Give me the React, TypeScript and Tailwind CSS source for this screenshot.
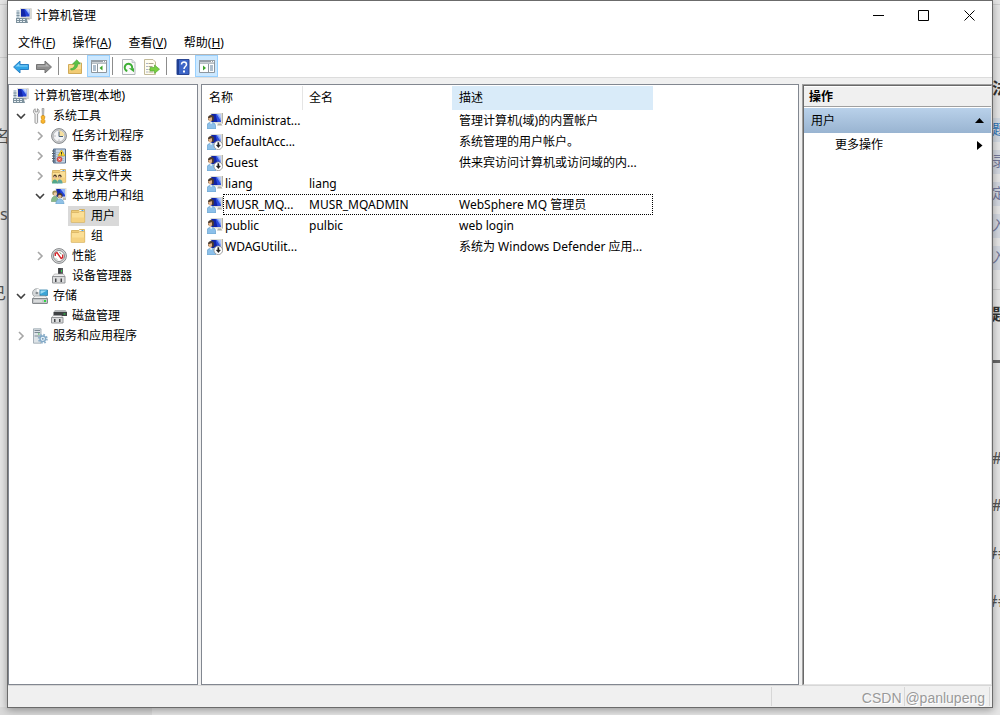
import type { ReactNode } from "react";

/* ---------- icons ---------- */

type IconProps = { size?: number };

function Svg({ size = 16, children }: IconProps & { children: ReactNode }) {
  return (
    <svg width={size} height={size} viewBox="0 0 16 16" aria-hidden="true" className="shrink-0">
      {children}
    </svg>
  );
}

function ComputerIcon() {
  return (
    <Svg>
      <path d="M4 0h11l.8.800V11H5z" fill="#cfd0cc" />
      <path d="M4 0h10.500v9.500H4z" fill="#e3e3dd" />
      <path d="M5 1h8.500v7.500H5z" fill="#2443d6" />
      <path d="M5 1h3l2 7.500H5z" fill="#1226a6" />
      <path d="M9 1h4.500v6z" fill="#8fb0fb" />
      <path d="M10.500 1h3v4z" fill="#c4d6ff" />
      <path d="M9 10h4l1 1.500H9z" fill="#a9aaa4" />
      <path d="M.5 2h3v8h-3z" fill="#b9c9d3" />
      <path d="M.5 4.500h3v1h-3zM.5 7h3v1h-3z" fill="#7a909e" />
      <path d="M0 10h10.500l1.500 5H0z" fill="#7d919d" />
      <path d="M1 11h2v1H1zm3 0h2v1H4zm3 0h2v1H7zM1 13h2v1H1zm3 0h2v1H4zm3 0h2v1H7z" fill="#e9f1f5" />
    </Svg>
  );
}

function ToolsIcon() {
  return (
    <Svg>
      <path d="M3.200.8C1 1.600.8 4.800 3 6v8.500c0 1.200 2.600 1.200 2.600 0V6c2.200-1.200 2-4.400-.2-5.200v3H3.200z" fill="#efefef" stroke="#858585" strokeWidth=".8" />
      <path d="M10 .5h2l-.4 7h-1.200z" fill="#c8c8c8" stroke="#8c8c8c" strokeWidth=".6" />
      <path d="M9.300 8.200c0-1 3.400-1 3.400 0v2l-.7 1 .9 1.300v1.800c0 1.400-3.800 1.400-3.800 0v-1.800l.9-1.300-.7-1z" fill="#fbb62c" stroke="#c8860e" strokeWidth=".7" />
    </Svg>
  );
}

function ClockIcon() {
  return (
    <Svg>
      <circle cx="8" cy="8" r="7.400" fill="#cfd1d3" stroke="#85888b" />
      <circle cx="8" cy="8" r="5.700" fill="#f4f5f7" stroke="#a9abae" strokeWidth=".7" />
      <path d="M8 8h5.400A5.400 5.400 0 0 0 8 2.600z" fill="#f5dfa0" />
      <path d="M8 3.500V8.500h4" fill="none" stroke="#4b637c" />
      <path d="M3.500 8h1M8 12.600v-1" stroke="#888" />
    </Svg>
  );
}

function EventIcon() {
  return (
    <Svg>
      <path d="M2.500 1h12v14h-12z" fill="#8199b4" stroke="#566f8d" />
      <path d="M5 1.500h9v13H5z" fill="#c7d5e4" />
      <path d="M5 4.500h8M5 6.500h8M5 8.500h8M5 10.500h8M5 12.500h8" stroke="#9db3c9" strokeWidth=".7" />
      <path d="M1 3h3M1 5.500h3M1 8h3M1 10.500h3M1 13h3" stroke="#59626d" />
      <path d="M10.500 2 14 7.800H7z" fill="#ffdb33" stroke="#c79d0a" strokeWidth=".6" />
      <path d="M10.500 4v2M10.500 6.500v.8" stroke="#333" />
      <circle cx="8.500" cy="11.300" r="2.500" fill="#e5564c" stroke="#b5332b" strokeWidth=".5" />
      <path d="m7.600 10.400 1.800 1.800m0-1.800-1.800 1.800" stroke="#fff" strokeWidth=".8" />
    </Svg>
  );
}

function FolderShape() {
  return (
    <>
      <path d="M1.500 2.500h7l1-1h5v12.500h-13z" fill="#f0cd77" stroke="#cfa953" strokeWidth=".8" />
      <path d="M9.500 2h4.500v1.500H9z" fill="#fdfdf8" />
      <path d="M11.500 2h2v1h-2z" fill="#4fa3e6" />
      <path d="M1.200 4.500h7.500l1-1h5v10.700H1.200z" fill="#fbdf96" stroke="#d8b263" strokeWidth=".8" />
      <path d="M1.600 9.500h12.700v4.300H1.600z" fill="#f5d281" />
    </>
  );
}

function FolderIcon() {
  return (
    <Svg>
      <FolderShape />
    </Svg>
  );
}

function SharedFolderIcon() {
  return (
    <Svg>
      <FolderShape />
      <circle cx="4" cy="8.300" r="1.700" fill="#4a3a28" />
      <circle cx="3.700" cy="9.300" r="1.200" fill="#e6bb95" />
      <path d="M1 15.500c0-5.400 5.600-5.400 5.600 0z" fill="#52a889" />
      <circle cx="8.800" cy="8.300" r="1.700" fill="#4a3a28" />
      <circle cx="8.500" cy="9.300" r="1.200" fill="#e6bb95" />
      <path d="M6 15.500c0-5.400 5.600-5.400 5.600 0z" fill="#5fa79d" />
    </Svg>
  );
}

function UsersIcon() {
  return (
    <Svg>
      <path d="M4.500 0h11v9.500h-11z" fill="#dfdfd8" />
      <path d="M5.500 1h8.500v7.500H5.500z" fill="#2443d6" />
      <path d="M5.500 1h3l2 7.500h-5z" fill="#1226a6" />
      <path d="M9.500 1H14v6z" fill="#8fb0fb" />
      <path d="M11.500 9.500h3.500v2.500h-3z" fill="#bdbcb2" />
      <circle cx="3.800" cy="5" r="2.500" fill="#9c8c53" />
      <circle cx="4.300" cy="6" r="1.700" fill="#ecc8a2" />
      <path d="M.3 13.500c0-7 7-7 7 0z" fill="#86b98a" stroke="#5d9163" strokeWidth=".5" />
      <circle cx="9" cy="7.500" r="2.600" fill="#4a3c31" />
      <circle cx="8.800" cy="8.600" r="1.800" fill="#e0b48d" />
      <path d="M4.800 16c0-7 8.200-7 8.200 0z" fill="#8fc1e6" stroke="#5a94c0" strokeWidth=".5" />
    </Svg>
  );
}

function PerformanceIcon() {
  return (
    <Svg>
      <circle cx="8" cy="8" r="7.400" fill="#dcdddd" stroke="#85878a" />
      <circle cx="8" cy="8" r="5.500" fill="#fff" stroke="#7b7e80" strokeWidth=".9" />
      <path d="M4.300 8V5.500L6 4.600l4.200 6 1.500-1V6.500" fill="none" stroke="#d3262a" strokeWidth="1.400" />
      <path d="M8.500 4.500l2 1.500M5 10.500l1 1" stroke="#6b8f6c" />
    </Svg>
  );
}

function DeviceIcon() {
  return (
    <Svg>
      <path d="M7 0h5v7H7z" fill="#5b5e60" />
      <path d="M7.500 0H9.500v7h-2z" fill="#3a3d3f" />
      <path d="M10 2h1v2h-1z" fill="#31d44c" />
      <path d="m1.500 8.500 2-2.500h9l1.500 2.500z" fill="#f0f0f0" stroke="#9a9a9a" strokeWidth=".6" />
      <path d="M1.500 8.500h12.500v6.500H1.500z" fill="#dcddde" stroke="#939598" />
      <path d="M4 10.500h1.500v3.500H4zm5.500 0H11v3.500H9.500z" fill="#46484b" />
    </Svg>
  );
}

function StorageIcon() {
  return (
    <Svg>
      <circle cx="4.800" cy="5" r="4.300" fill="#d6d9db" stroke="#969a9d" strokeWidth=".8" />
      <path d="M4.800 5V.8A4.200 4.200 0 0 1 8.300 3z" fill="#fbfcfc" />
      <circle cx="4.800" cy="5" r="1.300" fill="#858c90" />
      <path d="M8 2h7.500v5.500H8z" fill="#3ba5d6" stroke="#2b7da8" strokeWidth=".8" />
      <path d="M8.500 2.500H15L8.500 6z" fill="#9cdcf5" />
      <path d="m.8 10.500 2-2.500h10.700l2 2.500z" fill="#f2f3f3" stroke="#a3a6a8" strokeWidth=".7" />
      <path d="M.5 10.500h15V15q0 .5-.5.500H1Q.5 15.500.5 15z" fill="#c3c6c8" stroke="#85898c" />
      <path d="M2 12.500h8v1H2z" fill="#eef0f0" />
      <path d="M12 12h2v2h-2z" fill="#2fd543" />
    </Svg>
  );
}

function DiskIcon() {
  return (
    <Svg>
      <path d="m2.500 4 1.500-2h10.500L16 4z" fill="#b2b5b7" />
      <path d="M2.500 4H16v4H2.500z" fill="#3f4244" />
      <path d="M12.500 5.500h2v1h-2z" fill="#2fe04b" />
      <path d="m.8 9.500 1.500-2h8l1.500 2z" fill="#f4f4f4" stroke="#9a9c9e" strokeWidth=".6" />
      <path d="M.5 9.500h11.500V15H.5z" fill="#dcddde" stroke="#939598" />
      <path d="M3 11h1.500v3H3zm5 0h1.500v3H8z" fill="#46484b" />
    </Svg>
  );
}

function ServicesIcon() {
  return (
    <Svg>
      <path d="M1.500.8H9v14.400H1.500z" fill="#dde3e7" stroke="#94a1ab" strokeWidth=".8" />
      <path d="M2.500 2.500H8M2.500 4.500H8M2.500 8H8" stroke="#7c8a94" />
      <path d="M6 5.500h1.500v1H6z" fill="#3fbb4b" />
      <circle cx="10.800" cy="10.800" r="4" fill="none" stroke="#8fb1cb" strokeWidth="2" strokeDasharray="1.600 1.540" />
      <circle cx="10.800" cy="10.800" r="2.800" fill="#e3eef6" stroke="#82a9c7" strokeWidth="1.300" />
      <circle cx="10.800" cy="10.800" r=".9" fill="#6991b0" />
    </Svg>
  );
}

function UserIcon({ disabled = false }: { disabled?: boolean }) {
  return (
    <Svg>
      <path d="M3.500 0h12v10.500h-12z" fill="#dcdcd5" />
      <path d="M15 0h1v10.500h-1z" fill="#b3b3aa" />
      <path d="M4.500 1H14v8H4.500z" fill="#2a4ade" />
      <path d="M4.500 1h4l2 8h-6z" fill="#1124a4" />
      <path d="M9.500 1H14v7z" fill="#7f9ff6" />
      <path d="M11 1h3v4.500z" fill="#b5c9fd" />
      <path d="M11 10.500h3l1.500 2H10z" fill="#b1b1a8" />
      <path d="M1 4.500C1.200 1 6.800 1 7 4.500L6.500 8H2.500L1 6.500z" fill="#4d3c2f" />
      <path d="M1.300 5c1.500 0 2.500-.5 3.200-1 .8.800.9 3.500-.5 4.500-1.700.8-2.900-1.300-2.700-3.500z" fill="#e3b48b" />
      <path d="M.3 16v-4c0-3.600 7.900-3.600 8.200.5V16z" fill="#8cc0ea" stroke="#5693c4" strokeWidth=".6" />
      <path d="M3 9.300h2.500L4 11.300z" fill="#fff" />
      {disabled && (
        <>
          <circle cx="11.300" cy="11.300" r="4.300" fill="#fff" stroke="#8c8c8c" strokeWidth=".8" />
          <path d="M10.700 8.500h1.300v2.500h1.500l-2.100 2.700L9.200 11h1.500z" fill="#222" stroke="#222" strokeWidth=".4" />
        </>
      )}
    </Svg>
  );
}

function ArrowIcon({ forward = false }: { forward?: boolean }) {
  return forward ? (
    <Svg>
      <path d="M15.500 8 9 2v3.500H.5v5H9V14z" fill="#8e8e8e" stroke="#747474" />
      <path d="M9.800 4.500v2H1.500v1h12z" fill="#b8b8b8" />
    </Svg>
  ) : (
    <Svg>
      <path d="M.6 8 7 2v3.500h8.500v5H7V14z" fill="#2fa5e8" stroke="#2a80c4" />
      <path d="M6.200 4.500v2h8.300v1H2.500z" fill="#8bd5fa" />
    </Svg>
  );
}

function UpFolderIcon() {
  return (
    <Svg>
      <path d="M1.500 5.500h5l1-1.500h7v10.500h-13z" fill="#f9dc90" stroke="#d0aa58" />
      <path d="M2 10h12v4H2z" fill="#f1cb74" />
      <path d="M11 4h3v1.500h-3z" fill="#fff" />
      <path d="M3.500 9.800c3-.3 4.200-2 4.400-4.800H5.500L9.800.8l3.700 4.200h-2.700c-.3 4-3 6-6.800 6z" fill="#5bc146" stroke="#46a336" strokeWidth=".6" />
    </Svg>
  );
}

function PaneIcon({ side }: { side: "left" | "right" }) {
  return (
    <Svg>
      <path d="M.5 2.500h15v12H.5z" fill="#fff" stroke="#8d969e" />
      <path d="M0 2h16v2.500H0z" fill="#969fa7" />
      <path d="M12 3h1v1h-1zm2 0h1v1h-1z" fill="#fff" />
      <path d="M1 5.500h14" stroke="#b8c0c6" />
      {side === "left" ? (
        <>
          <path d="M6.500 6v8" stroke="#8d969e" />
          <path d="M2 8h3M2 10h3M2 12h3" stroke="#5f7f9c" />
          <path d="M11.500 7.500v5L8.500 10z" fill="#3ea52c" />
        </>
      ) : (
        <>
          <path d="M9.500 6v8" stroke="#8d969e" />
          <path d="M11 8h3M11 10h3M11 12h3" stroke="#5f7f9c" />
          <path d="M4 7.500v5L7 10z" fill="#3ea52c" />
        </>
      )}
    </Svg>
  );
}

function RefreshIcon() {
  return (
    <Svg>
      <path d="M1.500.5h9.500L14 3.500v12H1.500z" fill="#fafafa" stroke="#b2b7ba" />
      <path d="M11 .5v3h3" fill="#dfe3e6" stroke="#b2b7ba" strokeWidth=".7" />
      <path d="M6.300 12A3.700 3.700 0 1 1 11 9.500" fill="none" stroke="#3cae34" strokeWidth="2" />
      <path d="M7.800 9.300H13v4z" fill="#3cae34" />
    </Svg>
  );
}

function ExportIcon() {
  return (
    <Svg>
      <path d="M.5.500h8.500L11.500 3v12.500H.5z" fill="#fffdf0" stroke="#c2ba98" />
      <path d="M2.500 4.500h1M2.500 7.500h1M2.500 10.500h1M2.500 13h1" stroke="#5c6a9f" />
      <path d="M4.500 4.500h5M4.500 7.500h4M4.500 10.500h4M4.500 13h5" stroke="#aca68c" />
      <path d="M6 8.500h4.500V6l5 4.200-5 4.200v-2.500H6z" fill="#79cf41" stroke="#58ae38" strokeWidth=".7" />
    </Svg>
  );
}

function HelpIcon() {
  return (
    <Svg>
      <path d="M2 .5h12v15H2z" fill="#3d66c8" stroke="#2b4794" />
      <path d="M2 1h2v14H2z" fill="#1f3f92" />
      <path d="M6.500 5.500c0-3.300 5-3.200 5 0 0 2-2.500 2-2.500 4.500" fill="none" stroke="#fff" strokeWidth="1.500" />
      <path d="M8 11.500h2v2H8z" fill="#fff" />
    </Svg>
  );
}

/* ---------- data ---------- */

type TreeItem = {
  level: 0 | 1 | 2 | 3;
  label: string;
  icon: ReactNode;
  state?: "open" | "closed";
  selected?: boolean;
};

const tree: TreeItem[] = [
  { level: 0, label: "计算机管理(本地)", icon: <ComputerIcon /> },
  { level: 1, label: "系统工具", icon: <ToolsIcon />, state: "open" },
  { level: 2, label: "任务计划程序", icon: <ClockIcon />, state: "closed" },
  { level: 2, label: "事件查看器", icon: <EventIcon />, state: "closed" },
  { level: 2, label: "共享文件夹", icon: <SharedFolderIcon />, state: "closed" },
  { level: 2, label: "本地用户和组", icon: <UsersIcon />, state: "open" },
  { level: 3, label: "用户", icon: <FolderIcon />, selected: true },
  { level: 3, label: "组", icon: <FolderIcon /> },
  { level: 2, label: "性能", icon: <PerformanceIcon />, state: "closed" },
  { level: 2, label: "设备管理器", icon: <DeviceIcon /> },
  { level: 1, label: "存储", icon: <StorageIcon />, state: "open" },
  { level: 2, label: "磁盘管理", icon: <DiskIcon /> },
  { level: 1, label: "服务和应用程序", icon: <ServicesIcon />, state: "closed" },
];

const indent = ["pl-0.5", "pl-0.5", "pl-[21px]", "pl-[40px]"];

const users = [
  { name: "Administrat...", full: "", note: "管理计算机(域)的内置帐户" },
  { name: "DefaultAcc...", full: "", note: "系统管理的用户帐户。", disabled: true },
  { name: "Guest", full: "", note: "供来宾访问计算机或访问域的内...", disabled: true },
  { name: "liang", full: "liang", note: "" },
  { name: "MUSR_MQ...", full: "MUSR_MQADMIN", note: "WebSphere MQ 管理员", focused: true },
  { name: "public", full: "pulbic", note: "web login" },
  { name: "WDAGUtilit...", full: "", note: "系统为 Windows Defender 应用...", disabled: true },
];

const menus = [
  ["文件", "F"],
  ["操作", "A"],
  ["查看", "V"],
  ["帮助", "H"],
];

/* ---------- parts ---------- */

function TitleBar() {
  return (
    <header className="flex h-[30px] items-center bg-white">
      <span className="flex flex-1 items-center gap-1 pl-2">
        <ComputerIcon />
        <h1>计算机管理</h1>
      </span>
      <button aria-label="最小化" className="flex h-full w-[46px] items-center justify-center pb-px">
        <svg width="11" height="11" viewBox="0 0 11 11"><path d="M0 5.500h11" stroke="#000" /></svg>
      </button>
      <button aria-label="最大化" className="flex h-full w-[45px] items-center justify-center pb-px">
        <svg width="11" height="11" viewBox="0 0 11 11"><path d="M.5.500h10v10H.5z" fill="none" stroke="#000" /></svg>
      </button>
      <button aria-label="关闭" className="flex h-full w-[46px] items-center justify-center pb-px">
        <svg width="11" height="11" viewBox="0 0 11 11"><path d="m.5.500 10 10m0-10-10 10" stroke="#000" /></svg>
      </button>
    </header>
  );
}

function ToolButton({ label, active = false, children }: { label: string; active?: boolean; children: ReactNode }) {
  return (
    <button
      aria-label={label}
      className={
        active
          ? "flex h-[22px] w-[23px] items-center justify-center border border-[#99d1ff] bg-[#cce8ff]"
          : "flex h-[22px] w-[23px] items-center justify-center pr-px pt-0.5"
      }
    >
      {children}
    </button>
  );
}

function ToolSeparator() {
  return <span className="ml-0.5 mr-[5px] h-[18px] w-px bg-[#8c8c8c]" />;
}

function Toolbar() {
  return (
    <div role="toolbar" className="flex h-6 items-center border-y border-t-[#b4b4b4] border-b-[#dcdcdc] bg-white pl-0.5">
      <ToolButton label="后退"><ArrowIcon /></ToolButton>
      <ToolButton label="前进"><ArrowIcon forward /></ToolButton>
      <ToolSeparator />
      <ToolButton label="上一级"><UpFolderIcon /></ToolButton>
      <ToolButton label="显示/隐藏控制台树" active><PaneIcon side="left" /></ToolButton>
      <ToolSeparator />
      <ToolButton label="刷新"><RefreshIcon /></ToolButton>
      <ToolButton label="导出列表"><ExportIcon /></ToolButton>
      <ToolSeparator />
      <ToolButton label="帮助"><HelpIcon /></ToolButton>
      <ToolButton label="显示/隐藏操作窗格" active><PaneIcon side="right" /></ToolButton>
    </div>
  );
}

function Chevron({ state }: { state: "open" | "closed" }) {
  return (
    <svg width="10" height="10" viewBox="0 0 10 10" aria-hidden="true">
      {state === "open" ? (
        <path d="m1 3 4 4 4-4" fill="none" stroke="#404040" strokeWidth="1.600" />
      ) : (
        <path d="m3 1 4 4-4 4" fill="none" stroke="#a6a6a6" strokeWidth="1.600" />
      )}
    </svg>
  );
}

function ConsoleTree() {
  return (
    <nav className="w-[190px] shrink-0 border border-[#828790] bg-white pt-px">
      <ul>
        {tree.map((item) => (
          <li key={item.label} className={`flex h-5 items-center ${indent[item.level]}`}>
            {item.level > 0 && (
              <span className="flex w-[19px] shrink-0 items-center pl-[5px]">
                {item.state && <Chevron state={item.state} />}
              </span>
            )}
            <button
              className={
                item.selected
                  ? "flex h-5 items-center gap-[5px] whitespace-nowrap bg-[#d9d9d9] pl-0.5 pr-1"
                  : "flex h-5 items-center gap-[5px] whitespace-nowrap pl-0.5 pr-1"
              }
            >
              {item.icon}
              {item.label}
            </button>
          </li>
        ))}
      </ul>
    </nav>
  );
}

function UserList() {
  return (
    <main className="min-w-0 flex-1 border border-[#828790] bg-white pt-px">
      <table className="w-[451px] table-fixed border-separate border-spacing-0 text-left">
        <thead>
          <tr className="h-6">
            <th className="w-[101px] border-r border-[#e5e5e5] p-0 pl-[7px] font-normal">名称</th>
            <th className="w-[149px] p-0 pl-1.5 font-normal">全名</th>
            <th className="bg-[#d9ebf9] p-0 pl-[7px] font-normal">描述</th>
          </tr>
        </thead>
        <tbody>
          {users.map((u) => (
            <tr key={u.name} className="relative h-[21px] whitespace-nowrap">
              <td className="p-0 pl-[5px]">
                <span className="flex items-center gap-0.5">
                  <UserIcon disabled={u.disabled} />
                  {u.name}
                </span>
                {u.focused && (
                  <span className="absolute inset-y-0 left-[21px] right-0 border border-dotted border-black" />
                )}
              </td>
              <td className="p-0 pl-1.5">{u.full}</td>
              <td className="p-0 pl-[7px]">{u.note}</td>
            </tr>
          ))}
        </tbody>
      </table>
    </main>
  );
}

function ActionsPane() {
  return (
    <aside className="w-[190px] shrink-0 border-l border-t border-[#a0a0a0]">
      <div className="flex h-full flex-col border border-b-[#e3e3e3] border-l-[#696969] border-r-[#e3e3e3] border-t-[#696969] bg-white pt-px">
        <h2 className="flex h-5 items-center border-b border-[#a0a0a0] bg-[#f0f0f0] pl-[5px] font-bold">操作</h2>
        <button className="mt-px flex h-[25px] items-center justify-between bg-gradient-to-b from-[#b9d1ea] to-[#99b4d1] px-[7px]">
          用户
          <svg width="9" height="5" viewBox="0 0 9 5"><path d="M4.500 0 9 5H0z" /></svg>
        </button>
        <button className="flex h-6 items-center justify-between pl-[31px] pr-2">
          更多操作
          <svg width="6" height="9" viewBox="0 0 6 9"><path d="M0 0v9l5.500-4.500z" /></svg>
        </button>
      </div>
    </aside>
  );
}

function StatusBar() {
  return (
    <footer className="relative flex h-[22px] justify-end gap-[84px] border-t border-[#d7d7d7] bg-[#f0f0f0] pr-0.5">
      <span className="my-px w-px bg-[#d7d7d7]" />
      <span className="my-px ml-12 w-px bg-[#d7d7d7]" />
      <span className="my-px w-px bg-[#d7d7d7]" />
      <span className="absolute right-[7px] top-0.5 whitespace-nowrap font-['Liberation_Sans',sans-serif] text-sm leading-5 text-[#999999] [text-shadow:1px_1px_0_#ffffff]">
        CSDN @panlupeng
      </span>
    </footer>
  );
}

/* Web page lying behind the window; only its edges show. */
function PageBehind() {
  return (
    <div aria-hidden="true" className="absolute inset-0 overflow-hidden bg-[#e6e6e6] text-base leading-5 text-[#555555]">
      <div className="absolute inset-x-0 top-1 h-px bg-[#cfcfcf]" />
      <div className="absolute inset-x-0 top-[57px] h-px bg-[#cfcfcf]" />
      <div className="absolute bottom-0 left-0 h-2 w-[152px] bg-[#dadada]" />
      <span className="absolute -left-1.5 top-[126px]">名</span>
      <span className="absolute left-0 top-[204px]">s</span>
      <span className="absolute -left-2.5 top-[283px]">已</span>
      <div className="absolute right-0 top-[118px] h-6 w-2 bg-[#d3dae2]" />
      <div className="absolute right-0 top-[150px] h-6 w-2 bg-[#d3d8e0]" />
      <div className="absolute right-0 top-[182px] h-6 w-2 bg-[#d3d8e0]" />
      <div className="absolute right-0 top-[214px] h-6 w-2 bg-[#d3d8e0]" />
      <div className="absolute right-0 top-[246px] h-6 w-2 bg-[#d3d8e0]" />
      <div className="absolute right-0 top-[289px] h-px w-2 bg-[#cccccc]" />
      <div className="absolute right-0 top-[360px] h-[3px] w-2 bg-[#666666]" />
      <span className="absolute -right-2 top-[78px] font-bold text-[#333333]">法</span>
      <span className="absolute -right-1.5 top-[119px] text-sm leading-5 text-[#2b73b7]">题</span>
      <span className="absolute -right-1.5 top-[151px] text-sm leading-5 text-[#74799b]">录</span>
      <span className="absolute -right-1.5 top-[183px] text-sm leading-5 text-[#74799b]">定</span>
      <span className="absolute -right-1.5 top-[215px] text-sm leading-5 text-[#74799b]">入</span>
      <span className="absolute -right-1.5 top-[247px] text-sm leading-5 text-[#74799b]">入</span>
      <span className="absolute -right-2 top-[304px] font-bold text-[#333333]">题</span>
      <span className="absolute -right-0.5 top-[448px]">#</span>
      <span className="absolute -right-0.5 top-[495px]">#</span>
      <span className="absolute -right-2 top-[543px]">##</span>
      <span className="absolute -right-2 top-[591px]">##</span>
    </div>
  );
}

export default function App() {
  return (
    <div className="relative flex min-h-screen flex-col font-['Noto_Sans','Noto_Sans_CJK_SC',sans-serif] text-xs leading-4 text-black">
      <PageBehind />
      <div className="relative mx-[7px] mb-[7px] flex flex-1 flex-col border border-[#6b6b6b] bg-[#f0f0f0] shadow-[0_2px_8px_rgba(0,0,0,0.35)]">
        <TitleBar />
        <nav className="flex h-[23px] items-center gap-px bg-white pl-0.5">
          {menus.map(([name, key]) => (
            <button key={key} className="px-2">
              {name}(<u>{key}</u>)
            </button>
          ))}
        </nav>
        <Toolbar />
        <div className="flex flex-1 gap-[3px] pt-1.5">
          <ConsoleTree />
          <UserList />
          <ActionsPane />
        </div>
        <StatusBar />
      </div>
    </div>
  );
}
